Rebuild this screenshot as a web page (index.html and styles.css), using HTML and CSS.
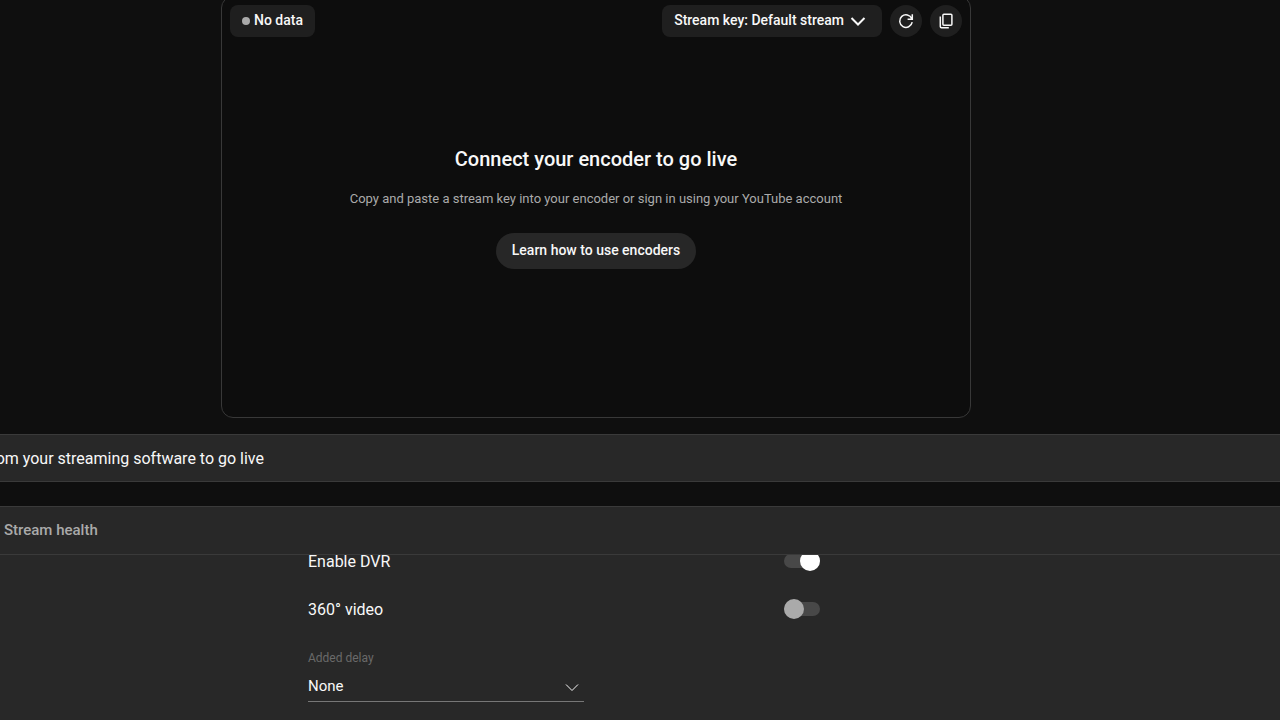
FILE: index.html
```html
<!DOCTYPE html>
<html lang="en">
<head>
    <meta charset="UTF-8">
    <title>Stream</title>
    <link rel="stylesheet" href="styles.css">
</head>
<body>
    <div class="page">
        <section class="preview">
            <div class="toolbar">
                <div class="status"><span class="dot"></span>No data</div>
                <div class="tools">
                    <button type="button" class="key-btn">Stream key: Default stream
                        <svg width="24" height="24" viewBox="0 0 24 24"><path d="M5.5 9 12 15.5 18.5 9"/></svg>
                    </button>
                    <button type="button" class="icon-btn" aria-label="Reset stream key">
                        <svg width="20" height="20" viewBox="0 0 20 20"><path d="M15.8 7.6A6.3 6.3 0 1 0 16.2 11.2M16.3 3.2V8.2H11.6"/></svg>
                    </button>
                    <button type="button" class="icon-btn" aria-label="Copy stream key">
                        <svg width="20" height="20" viewBox="0 0 20 20"><rect x="6.9" y="3.3" width="9" height="11" rx="1"/><path d="M4.3 5.5V15.6Q4.3 16.8 5.5 16.8H12.8"/></svg>
                    </button>
                </div>
            </div>
            <div class="connect">
                <h1>Connect your encoder to go live</h1>
                <p>Copy and paste a stream key into your encoder or sign in using your YouTube account</p>
                <a href="#" class="learn">Learn how to use encoders</a>
            </div>
        </section>

        <div class="banner"><p>om your streaming software to go live</p></div>

        <nav class="tabs"><a href="#">Stream health</a></nav>

        <section class="settings">
            <div class="setting-list">
                <div class="row">
                    <label for="dvr">Enable DVR</label>
                    <input type="checkbox" id="dvr" class="toggle" checked>
                </div>
                <div class="row">
                    <label for="video360">360° video</label>
                    <input type="checkbox" id="video360" class="toggle">
                </div>
                <div class="delay">
                    <label for="delay">Added delay</label>
                    <div class="select-box">
                        <select id="delay">
                            <option>None</option>
                        </select>
                        <svg width="24" height="24" viewBox="0 0 24 24"><path d="M6 9.5 12 15.5 18 9.5"/></svg>
                    </div>
                </div>
            </div>
        </section>
    </div>
</body>
</html>
```

FILE: styles.css
```css
*{margin:0;padding:0;box-sizing:border-box;}
body{
    background-color: #0f0f0f;
    color: #f8f8f8;
    font-family: Roboto, "Liberation Sans", sans-serif;
    font-size: 16px;
    overflow: hidden;
}
a{
    color: inherit;
    text-decoration: none;
}
button,select{
    border: none;
    color: inherit;
    font-family: inherit;
    cursor: pointer;
}
svg{
    flex-shrink: 0;
    fill: none;
    stroke: currentColor;
}
.page{
    display: flex;
    flex-direction: column;
    min-height: 100vh;
}

/* preview */
.preview{
    display: flex;
    flex-direction: column;
    align-self: center;
    width: 750px;
    max-width: 100%;
    aspect-ratio: 16 / 9;
    margin: -4px 88px 16px 0;
    padding: 8px;
    border: 1px solid #383838;
    border-radius: 12px;
    background-color: #0d0d0d;
}
.toolbar,.tools{
    display: flex;
    align-items: center;
    gap: 8px;
}
.toolbar{
    justify-content: space-between;
}
.status,.key-btn{
    display: flex;
    align-items: center;
    height: 32px;
    padding: 0 12px 2px;
    border-radius: 8px;
    background-color: #1f1f1f;
    font-size: 14px;
    font-weight: 500;
}
.dot{
    width: 8px;
    height: 8px;
    margin: 2px 4px 0 0;
    border-radius: 50%;
    background-color: #aaa;
}
.key-btn{
    gap: 2px;
}
.key-btn svg{
    margin-top: 2px;
    stroke-width: 2;
}
.icon-btn{
    display: flex;
    align-items: center;
    justify-content: center;
    width: 32px;
    height: 32px;
    border-radius: 50%;
    background-color: #1f1f1f;
}
.icon-btn svg{
    stroke-width: 1.5;
}
.connect{
    display: flex;
    flex-direction: column;
    align-items: center;
    margin-top: 108px;
    text-align: center;
}
.connect h1{
    font-size: 20px;
    font-weight: 500;
    line-height: 28px;
}
.connect p{
    margin: 16px 0 24px;
    color: #aaa;
    font-size: 13px;
    line-height: 20px;
}
.learn{
    padding: 0 16px 2px;
    border-radius: 18px;
    background-color: #272727;
    font-size: 14px;
    font-weight: 500;
    line-height: 34px;
}

/* banner */
.banner{
    height: 48px;
    margin-bottom: 24px;
    border: solid #3a3a3a;
    border-width: 1px 0;
    background-color: #282828;
}
.banner p{
    display: flex;
    justify-content: flex-end;
    width: 264px;
    line-height: 48px;
    white-space: nowrap;
}

/* tabs */
.tabs{
    height: 49px;
    padding-left: 4px;
    border: solid #3a3a3a;
    border-width: 1px 0;
    background-color: #282828;
    color: #aaa;
    font-size: 15px;
    font-weight: 500;
    line-height: 46px;
}

/* settings */
.settings{
    flex: 1;
    padding-left: 308px;
    background-color: #282828;
    overflow: hidden;
}
.setting-list{
    max-width: 512px;
    margin-top: -18px;
}
.row{
    display: flex;
    align-items: center;
    justify-content: space-between;
    height: 48px;
}
.row label{
    padding-top: 2px;
}
.toggle{
    display: flex;
    align-items: center;
    width: 36px;
    height: 14px;
    border-radius: 7px;
    background-color: #484848;
    appearance: none;
    cursor: pointer;
}
.toggle::before{
    content: "";
    width: 20px;
    height: 20px;
    flex-shrink: 0;
    border-radius: 50%;
    background-color: #aaa;
}
.toggle:checked{
    justify-content: flex-end;
}
.toggle:checked::before{
    background-color: #fff;
}
.delay{
    width: 276px;
    margin-top: 17px;
}
.delay label{
    display: block;
    color: #6a6a6a;
    font-size: 12px;
    line-height: 16px;
}
.select-box{
    display: grid;
    align-items: center;
    height: 36px;
    padding-top: 6px;
    border-bottom: 1px solid #777;
}
.select-box select,.select-box svg{
    grid-area: 1 / 1;
}
.select-box select{
    height: 28px;
    background: none;
    font-size: 15px;
    appearance: none;
}
.select-box svg{
    margin-top: 2px;
    justify-self: end;
    pointer-events: none;
}
```
